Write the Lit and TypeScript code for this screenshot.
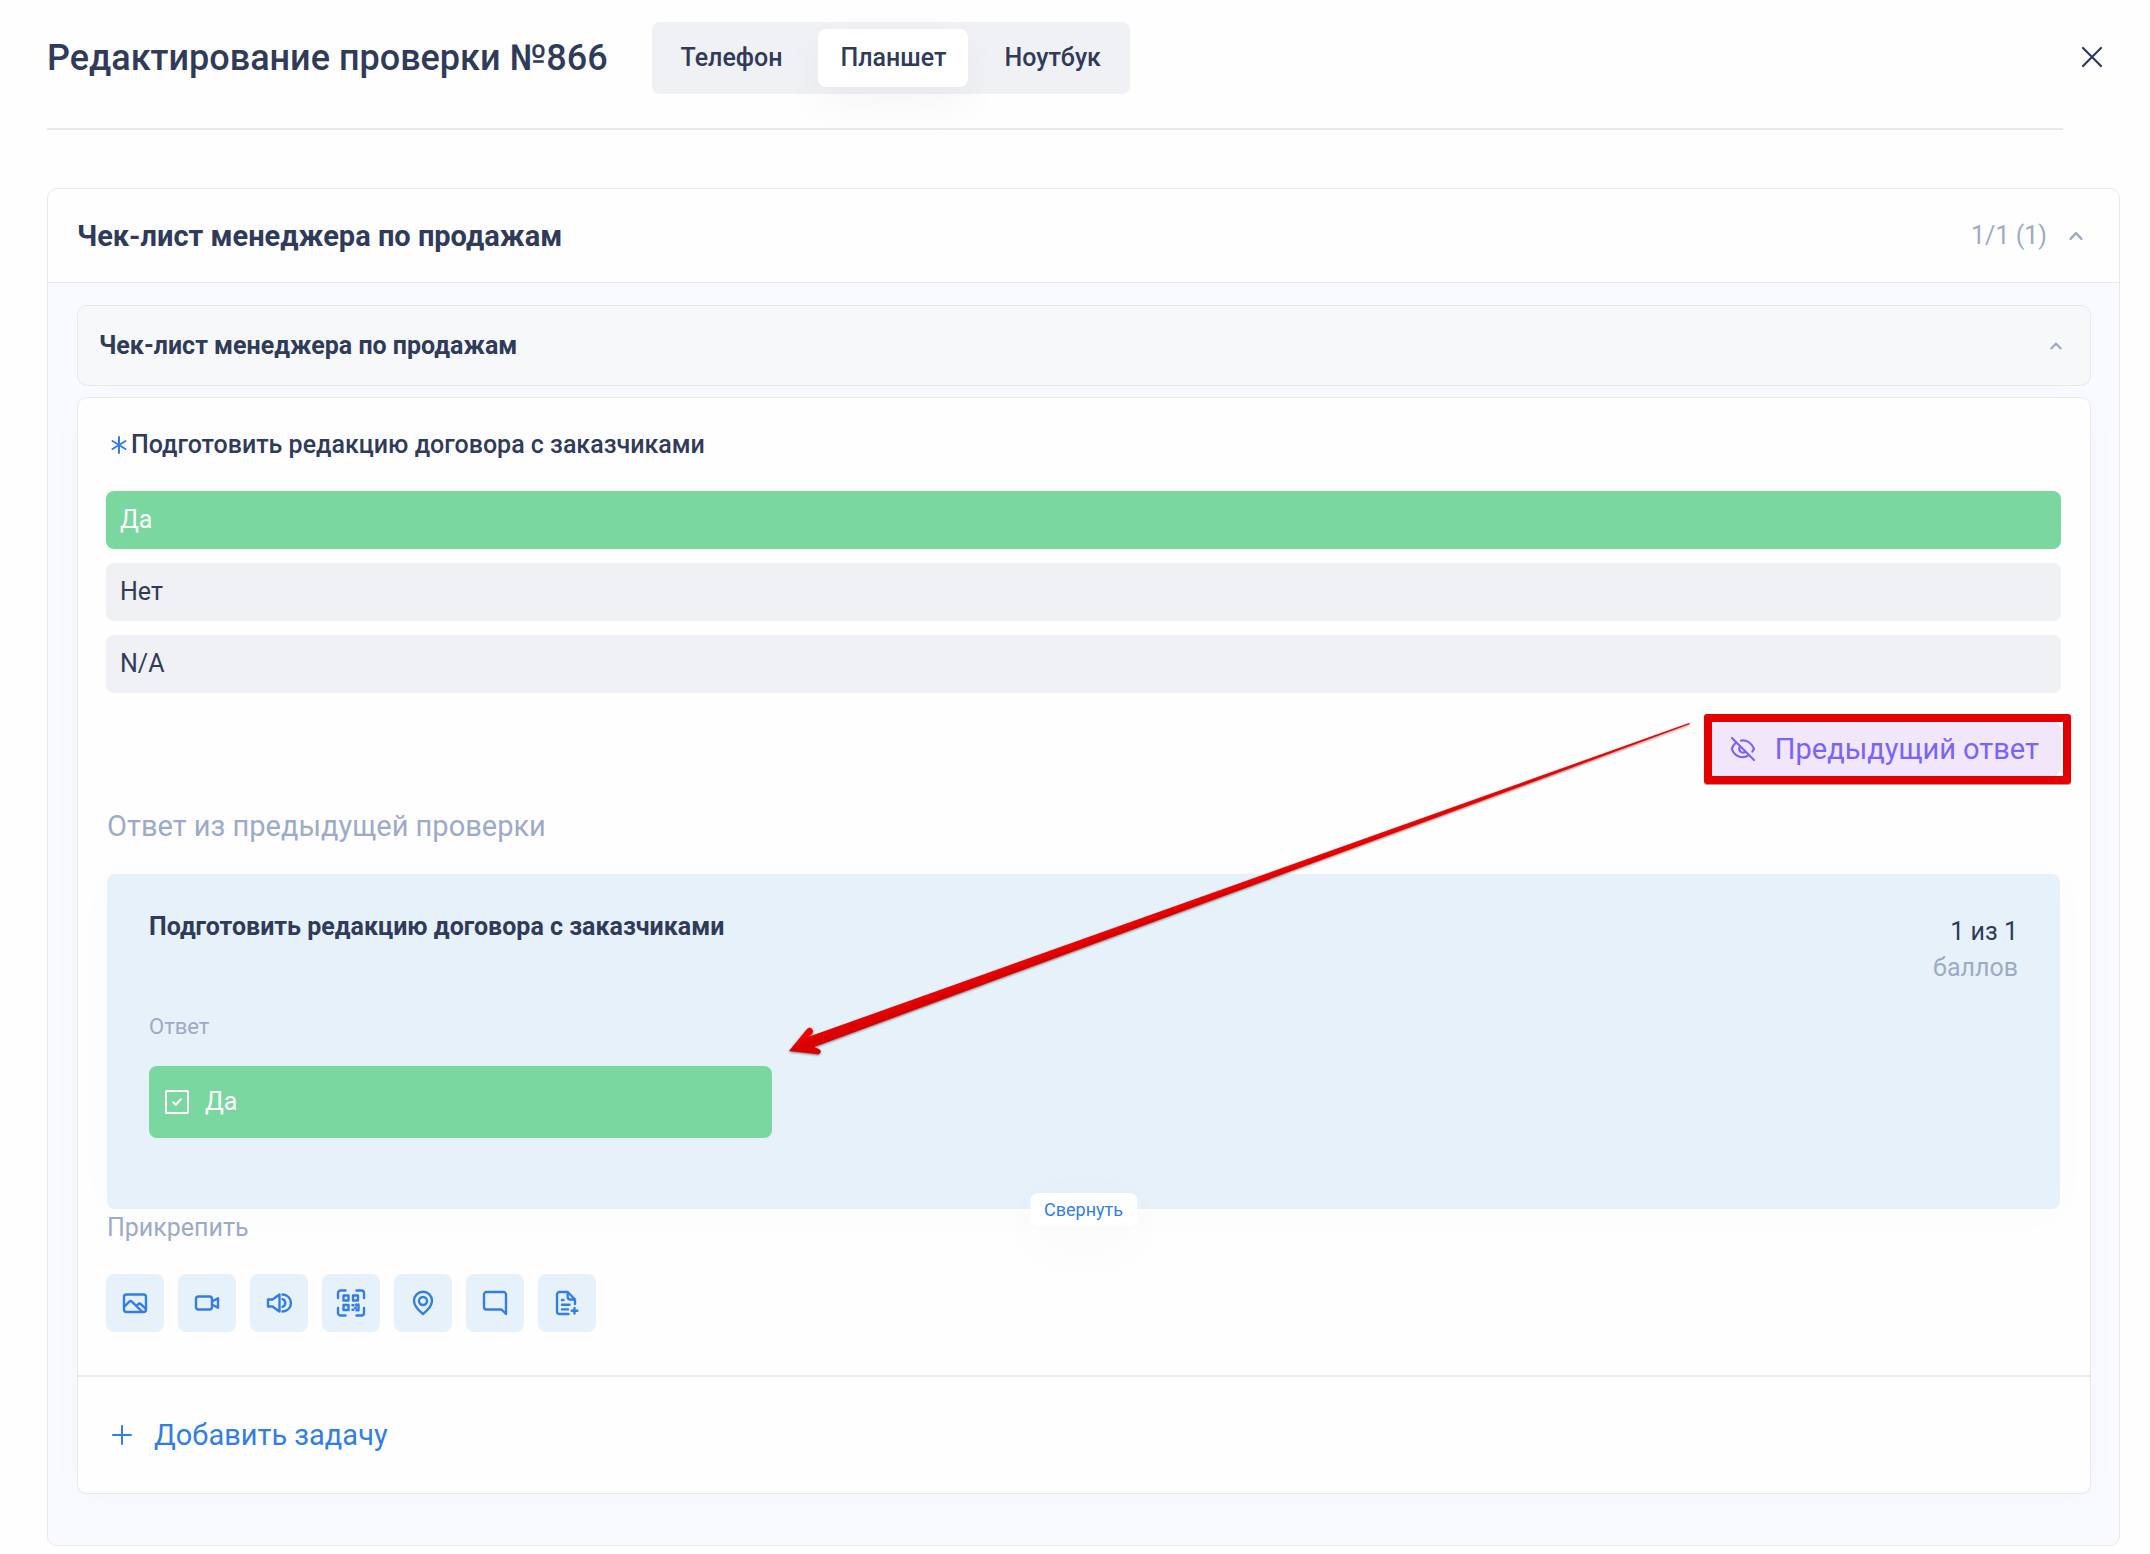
import { LitElement, html, css, svg } from "lit";
import { customElement, state } from "lit/decorators.js";
import { classMap } from "lit/directives/class-map.js";

const TABS = ["Телефон", "Планшет", "Ноутбук"];
const OPTIONS = ["Да", "Нет", "N/A"];

const ATTACHMENTS = [
  {
    label: "Фото",
    icon: svg`<rect x="1" y="3.500" width="22" height="17.500" rx="2.500"/><path d="M1.500 15.500 6 10.800c.9-.9 2.200-.9 3.100 0L19 20.500M13.500 15l1.500-1.600c.9-.9 2.200-.9 3.100 0l4.400 4.300"/>`,
  },
  {
    label: "Видео",
    icon: svg`<rect x="1" y="5.500" width="16" height="13" rx="2.500"/><path d="m17 10.500 6-3.300v9.600l-6-3.300"/>`,
  },
  {
    label: "Аудио",
    icon: svg`<path d="M1 8.500h4.500L12.500 3.500v17L5.500 15.500H1zM15.500 3.500a8.500 8.500 0 0 1 0 17M15.500 8.200a4 4 0 0 1 0 7.600"/>`,
  },
  {
    label: "QR-код",
    icon: svg`<path d="M-1 7V2a2.500 2.500 0 0 1 2.500-2.500h5M17.500-.5h5A2.500 2.500 0 0 1 25 2v5M25 17v5a2.500 2.500 0 0 1-2.500 2.500h-5M6.500 24.500h-5A2.500 2.500 0 0 1-1 22v-5"/><path d="M4.500 4.500h5v5h-5zM14 4.500h5v5h-5zM4.500 14h5v5h-5zM13.500 14.200h1M17.300 13.500v.8M19.500 13.500v5.800h-2M13.500 18.800h1M16.200 16.700h.6"/>`,
  },
  {
    label: "Геолокация",
    icon: svg`<path d="M12 23C6 18.200 3 14 3 9.800a9 9 0 0 1 18 0C21 14 18 18.200 12 23z"/><circle cx="12" cy="10" r="4"/>`,
  },
  {
    label: "Комментарий",
    icon: svg`<path d="M23 23l-4.500-4.500h-15A2.500 2.500 0 0 1 1 16V3.500A2.500 2.500 0 0 1 3.500 1h17A2.500 2.500 0 0 1 23 3.500z"/>`,
  },
  {
    label: "Документ",
    icon: svg`<path d="M20 13V8.500L12.700 1H4.500A2.500 2.500 0 0 0 2 3.500v17A2.500 2.500 0 0 0 4.500 23h9M12.700 1v5a2.500 2.500 0 0 0 2.500 2.500H20M7 9h1.500M7 13.800h7.500M7 18.400h6M19.500 17v5.600M16.700 19.800h5.600"/>`,
  },
];

@customElement("app-root")
export class AppRoot extends LitElement {
  @state() private tab = 1;
  @state() private option = 0;

  static styles = css`
    :host {
      --ink: #303b5a;
      --muted: #9dabc7;
      --blue: #337ee2;
      --line: #e8e9eb;
      --field: #f0f1f5;
      --sky: #e6f1fa;
      --green: #7ad7a0;
      display: block;
      padding: 0 30px 9px 47px;
      background: #fefefe;
      color: var(--ink);
      font: 400 25px/30px Roboto, "Liberation Sans", sans-serif;
    }
    * { box-sizing: border-box; }
    h1, h2, h3, h4, p, fieldset { margin: 0; padding: 0; border: 0; font-size: inherit; }
    button {
      margin: 0;
      padding: 0;
      border: 0;
      background: none;
      color: inherit;
      font: inherit;
      cursor: pointer;
    }
    svg { display: block; fill: none; stroke: currentColor; overflow: visible; }

    .top { display: flex; margin-bottom: 58px; }
    .heading {
      flex: 1;
      display: flex;
      align-items: center;
      gap: 44px;
      padding: 22px 0 34px;
      border-bottom: 2px solid var(--line);
    }
    .title { font-size: 36px; line-height: 42px; font-weight: 500; }
    .tabs {
      display: flex;
      gap: 14px;
      padding: 7px;
      border-radius: 8px;
      background: var(--field);
    }
    .tab {
      height: 58px;
      padding: 0 22px;
      border-radius: 8px;
      font-weight: 500;
    }
    .tab.active {
      background: #fff;
      box-shadow: 0 16px 44px rgba(0, 0, 0, 0.04);
    }
    .close {
      align-self: flex-start;
      display: grid;
      place-items: center;
      width: 57px;
      height: 58px;
      margin-top: 28px;
    }

    .card { border: 1px solid var(--line); border-radius: 10px; overflow: hidden; }
    .card-head {
      display: flex;
      align-items: center;
      justify-content: space-between;
      height: 94px;
      padding: 0 36px 0 29px;
      border-bottom: 1px solid var(--line);
    }
    .card-title { font-size: 29px; line-height: 32px; font-weight: 700; }
    .count { display: flex; align-items: center; gap: 22px; color: var(--muted); }
    .card-body { padding: 22px 28px 51px 29px; background: #f9faff; }

    .section {
      display: flex;
      align-items: center;
      justify-content: space-between;
      height: 81px;
      margin-bottom: 11px;
      padding: 0 28px 0 21px;
      border: 1px solid var(--line);
      border-radius: 10px;
      background: #f7f8fa;
      color: var(--muted);
    }
    .section-title { color: var(--ink); font-weight: 700; }

    .question {
      position: relative;
      border: 1px solid var(--line);
      border-radius: 10px;
      background: #fefefe;
      box-shadow: 0 4px 40px rgba(0, 0, 0, 0.02);
    }
    .question-body { padding: 32px 29px 43px 28px; }
    .legend {
      display: flex;
      align-items: center;
      gap: 4px;
      margin-bottom: 31px;
      padding: 0 0 0 5px;
      font-weight: 500;
    }
    .star { color: var(--blue); }
    .options { display: grid; gap: 14px; }
    .option {
      display: flex;
      align-items: center;
      height: 58px;
      padding: 0 14px;
      border-radius: 8px;
      background: var(--field);
      cursor: pointer;
    }
    .option.chosen { background: var(--green); color: #fff; }
    .radio { appearance: none; width: 0; height: 0; margin: 0; }

    .previous-row { display: flex; justify-content: flex-end; margin-top: 21px; }
    .frame {
      margin-right: -10px;
      border: 8px solid #e40000;
      border-radius: 3px;
      box-shadow: 0 1px 1px rgba(0, 0, 0, 0.4);
    }
    .previous {
      display: flex;
      align-items: center;
      gap: 19px;
      height: 54px;
      margin-right: 2px;
      padding: 0 22px 0 18px;
      border-radius: 0 8px 8px 0;
      background: #f2e6fb;
      color: #7864fb;
      font-size: 29px;
      line-height: 32px;
    }
    .caption {
      margin: 26px 1px 32px;
      color: var(--muted);
      font-size: 29px;
      line-height: 32px;
    }

    .answer {
      position: relative;
      display: flex;
      justify-content: space-between;
      margin: 0 1px;
      padding: 38px 42px 71px;
      border-radius: 8px;
      background: var(--sky);
      box-shadow: 0 4px 40px rgba(0, 0, 0, 0.02);
    }
    .answer-main { flex: 0 1 623px; }
    .answer-title { font-weight: 700; }
    .answer-label { margin: 72px 0 26px; color: var(--muted); font-size: 22px; line-height: 26px; }
    .answer-value {
      display: flex;
      align-items: center;
      gap: 16px;
      height: 72px;
      padding: 0 16px;
      border-radius: 8px;
      background: var(--green);
      color: #fff;
    }
    .check { display: grid; place-items: center; }
    .check > * { grid-area: 1 / 1; }
    .box {
      appearance: none;
      width: 24px;
      height: 24px;
      margin: 0;
      border: 2px solid #fff;
      border-radius: 2px;
    }
    .score { padding-top: 2px; text-align: right; line-height: 36px; }
    .unit { color: var(--muted); }
    .collapse {
      position: absolute;
      left: 50%;
      bottom: -17px;
      translate: -50% 0;
      height: 33px;
      padding: 0 14px;
      border-radius: 8px;
      background: #fff;
      color: var(--blue);
      font-size: 18px;
      line-height: 22px;
      box-shadow: 0 16px 60px rgba(0, 0, 0, 0.03);
    }
    .attach { margin: 4px 1px 31px; color: var(--muted); }
    .tools { display: flex; gap: 14px; }
    .tool {
      display: grid;
      place-items: center;
      width: 58px;
      height: 58px;
      border-radius: 8px;
      background: var(--sky);
      color: var(--blue);
    }
    .question-foot { padding: 42px 34px; border-top: 2px solid var(--line); }
    .add {
      display: flex;
      align-items: center;
      gap: 22px;
      color: var(--blue);
      font-size: 29px;
      line-height: 32px;
    }
    .pointer {
      position: absolute;
      right: 399px;
      top: 324px;
      pointer-events: none;
      stroke: none;
      filter: drop-shadow(0 1px 1px rgba(0, 0, 0, 0.5));
    }
  `;

  private chevron(width: number) {
    return html`<svg width=${width} height=${width} viewBox="0 0 14 14" stroke-width="2.500" stroke-linecap="round" stroke-linejoin="round" aria-hidden="true"><path d="M1.500 9.800 7 4.200l5.500 5.600"/></svg>`;
  }

  private attachIcon(icon: unknown) {
    return html`<svg width="24" height="24" viewBox="0 0 24 24" stroke-width="2.400" stroke-linecap="round" stroke-linejoin="round" aria-hidden="true">${icon}</svg>`;
  }

  render() {
    return html`
      <header class="top">
        <div class="heading">
          <h1 class="title">Редактирование проверки №866</h1>
          <div class="tabs" role="tablist">
            ${TABS.map(
              (name, i) => html`<button
                class=${classMap({ tab: true, active: i === this.tab })}
                role="tab"
                aria-selected=${i === this.tab}
                @click=${() => (this.tab = i)}
              >${name}</button>`,
            )}
          </div>
        </div>
        <button class="close" aria-label="Закрыть">
          <svg width="20" height="20" viewBox="0 0 20 20" stroke-width="2.200" stroke-linecap="round" aria-hidden="true"><path d="m1 1 18 18M19 1 1 19"/></svg>
        </button>
      </header>

      <main class="card">
        <div class="card-head">
          <h2 class="card-title">Чек-лист менеджера по продажам</h2>
          <button class="count" aria-expanded="true"><span>1/1 (1)</span>${this.chevron(14)}</button>
        </div>
        <div class="card-body">
          <div class="section">
            <h3 class="section-title">Чек-лист менеджера по продажам</h3>
            <button aria-label="Свернуть раздел">${this.chevron(12)}</button>
          </div>

          <section class="question">
            <div class="question-body">
              <fieldset role="radiogroup" aria-labelledby="question">
                <div class="legend">
                  <svg class="star" width="16" height="18" viewBox="0 0 16 18" stroke-width="2" stroke-linecap="round" aria-hidden="true"><path d="M8 1v16M1.500 5l13 8M14.500 5l-13 8"/></svg>
                  <span id="question">Подготовить редакцию договора с заказчиками</span>
                </div>
                <div class="options">
                  ${OPTIONS.map(
                    (name, i) => html`<label class=${classMap({ option: true, chosen: i === this.option })}>
                      <input class="radio" type="radio" name="answer" .checked=${i === this.option} @change=${() => (this.option = i)} />${name}
                    </label>`,
                  )}
                </div>
              </fieldset>

              <div class="previous-row">
                <div class="frame">
                  <button class="previous">
                    <svg width="26" height="26" viewBox="0 0 26 26" stroke-width="2.200" stroke-linecap="round" stroke-linejoin="round" aria-hidden="true">
                      <path d="M2 2l22 22M11 4.600c5.500-1 10.500 2.400 13 8-.4 1.200-1 2-1.600 2.900M5.500 7C3.800 8.500 2.600 10.600 1.800 12.800 4.500 20 11 23 17.500 20M9.500 11.200c-1.400 3.800 2.400 6.800 5.800 4.700"/>
                    </svg>
                    <span>Предыдущий ответ</span>
                  </button>
                </div>
              </div>

              <p class="caption">Ответ из предыдущей проверки</p>
              <div class="answer">
                <div class="answer-main">
                  <h4 class="answer-title">Подготовить редакцию договора с заказчиками</h4>
                  <p class="answer-label">Ответ</p>
                  <label class="answer-value">
                    <span class="check">
                      <input class="box" type="checkbox" checked />
                      <svg width="10" height="8" viewBox="0 0 10 8" stroke-width="2.200" stroke-linecap="round" stroke-linejoin="round" aria-hidden="true"><path d="M1.200 4.200 3.800 6.700 8.800 1.200"/></svg>
                    </span>
                    Да
                  </label>
                </div>
                <div class="score">
                  <div>1 из 1</div>
                  <div class="unit">баллов</div>
                </div>
                <button class="collapse">Свернуть</button>
              </div>

              <p class="attach">Прикрепить</p>
              <div class="tools">
                ${ATTACHMENTS.map((a) => html`<button class="tool" aria-label=${a.label}>${this.attachIcon(a.icon)}</button>`)}
              </div>
            </div>
            <div class="question-foot">
              <button class="add">
                <svg width="20" height="20" viewBox="0 0 20 20" stroke-width="2" stroke-linecap="round" aria-hidden="true"><path d="M10 1v18M1 10h18"/></svg>
                <span>Добавить задачу</span>
              </button>
            </div>
            <svg class="pointer" width="902" height="334" viewBox="0 0 902 334" aria-hidden="true">
              <defs>
                <linearGradient id="shade" gradientUnits="userSpaceOnUse" x1="400" y1="173" x2="406" y2="190">
                  <stop offset="0.300" stop-color="#f40000" />
                  <stop offset="0.700" stop-color="#d80000" />
                </linearGradient>
              </defs>
              <path fill="url(#shade)" d="M901 2 L25 325 L30 327 Q33 329 31 331 Q30 333 27 332 L0 329 L18 307 Q21 304 23 307 Q25 309 23 312 L19 315 L900 1 Z" />
            </svg>
          </section>
        </div>
      </main>
    `;
  }
}
